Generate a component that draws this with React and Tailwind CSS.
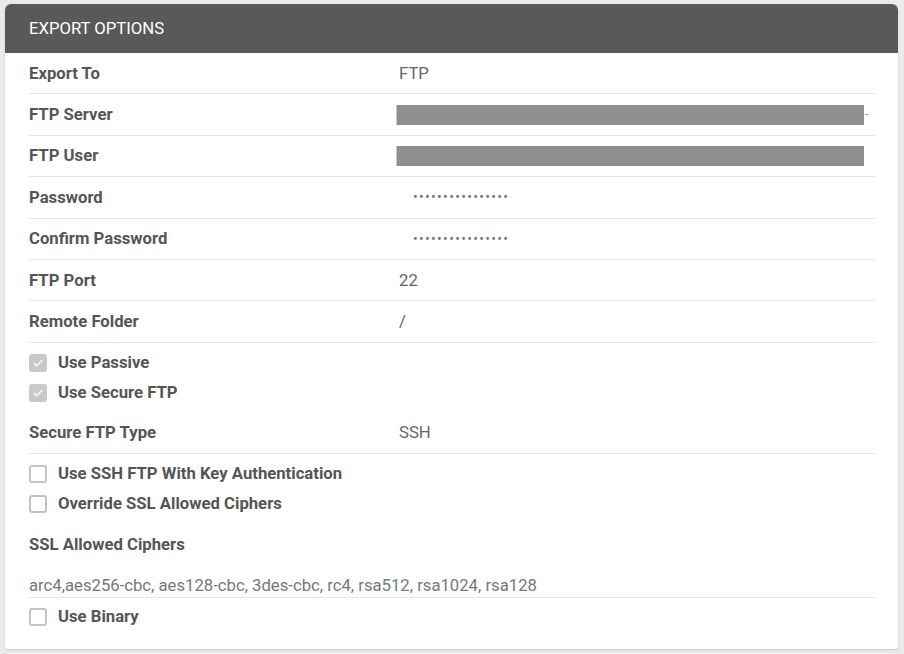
import React from 'react';

const font = { fontFamily: 'Roboto, "Liberation Sans", sans-serif' };

const fields = [
  { label: 'Export To', value: 'FTP' },
  { label: 'FTP Server', masked: true, tail: true },
  { label: 'FTP User', masked: true },
  { label: 'Password', dots: true },
  { label: 'Confirm Password', dots: true },
  { label: 'FTP Port', value: '22' },
  { label: 'Remote Folder', value: '/' },
];

const Check = ({ checked, label }) => (
  <div className="flex items-center h-[30px]">
    {checked ? (
      <span className="w-[18px] h-[18px] rounded-[3px] bg-[#c9c9c9] flex items-center justify-center">
        <svg width="12" height="12" viewBox="0 0 12 12" fill="none">
          <path d="M2.2 6.3 L4.8 8.8 L9.8 3.4" stroke="#fff" strokeWidth="1.4" strokeLinecap="round" strokeLinejoin="round" />
        </svg>
      </span>
    ) : (
      <span className="w-[18px] h-[18px] rounded-[3px] border-2 border-[#c4c4c4] bg-white" />
    )}
    <span className="ml-[11px] text-[16.7px] font-bold text-[#555]">{label}</span>
  </div>
);

const Row = ({ f }) => (
  <div className="flex items-center h-[41.4px] border-b border-[#e6e6e6]">
    <div className="w-[370px] text-[16.7px] font-bold text-[#555]">{f.label}</div>
    {f.value && <div className="text-[16.7px] text-[#666]">{f.value}</div>}
    {f.masked && (
      <div className="relative flex items-center -ml-[3px]">
        <div className="w-[468px] h-[20px] bg-[#8f8f8f] border-l border-[#c8c8c8]" />
        {f.tail && <span className="ml-[1px] w-[3px] h-px bg-[#999]" />}
      </div>
    )}
    {f.dots && (
      <div className="ml-[14px] text-[14px] tracking-[1.3px] text-[#777] leading-none">
        {'\u2022'.repeat(16)}
      </div>
    )}
  </div>
);

export default function App() {
  return (
    <div className="min-h-screen bg-[#ebebeb] pt-[4px] pl-[5px]" style={font}>
      <div className="w-[893px] bg-white rounded-t-[6px] rounded-b-[3px] shadow-[0_1px_2px_rgba(0,0,0,0.15)] overflow-hidden">
        <div className="h-[49px] bg-[#595959] flex items-center px-[24px] text-white text-[16.7px]">
          EXPORT OPTIONS
        </div>
        <div className="pl-[24px] pr-[23px] pb-[13px]">
          {fields.map((f) => (
            <Row key={f.label} f={f} />
          ))}
          <div className="pt-[5px] pb-[4px]">
            <Check checked label="Use Passive" />
            <Check checked label="Use Secure FTP" />
          </div>
          <div className="flex items-center h-[42px] border-b border-[#e6e6e6]">
            <div className="w-[370px] text-[16.7px] font-bold text-[#555]">Secure FTP Type</div>
            <div className="text-[16.7px] text-[#666]">SSH</div>
          </div>
          <div className="pt-[5px] pb-[4px]">
            <Check label="Use SSH FTP With Key Authentication" />
            <Check label="Override SSL Allowed Ciphers" />
          </div>
          <div className="h-[44px] flex items-center text-[16.7px] font-bold text-[#555]">SSL Allowed Ciphers</div>
          <div className="h-[31px] flex items-end pb-[1px] border-b border-[#e6e6e6] text-[16.7px] leading-[20px] text-[#777]">
            arc4,aes256-cbc, aes128-cbc, 3des-cbc, rc4, rsa512, rsa1024, rsa128
          </div>
          <div className="py-[4px]">
            <Check label="Use Binary" />
          </div>
        </div>
      </div>
    </div>
  );
}
